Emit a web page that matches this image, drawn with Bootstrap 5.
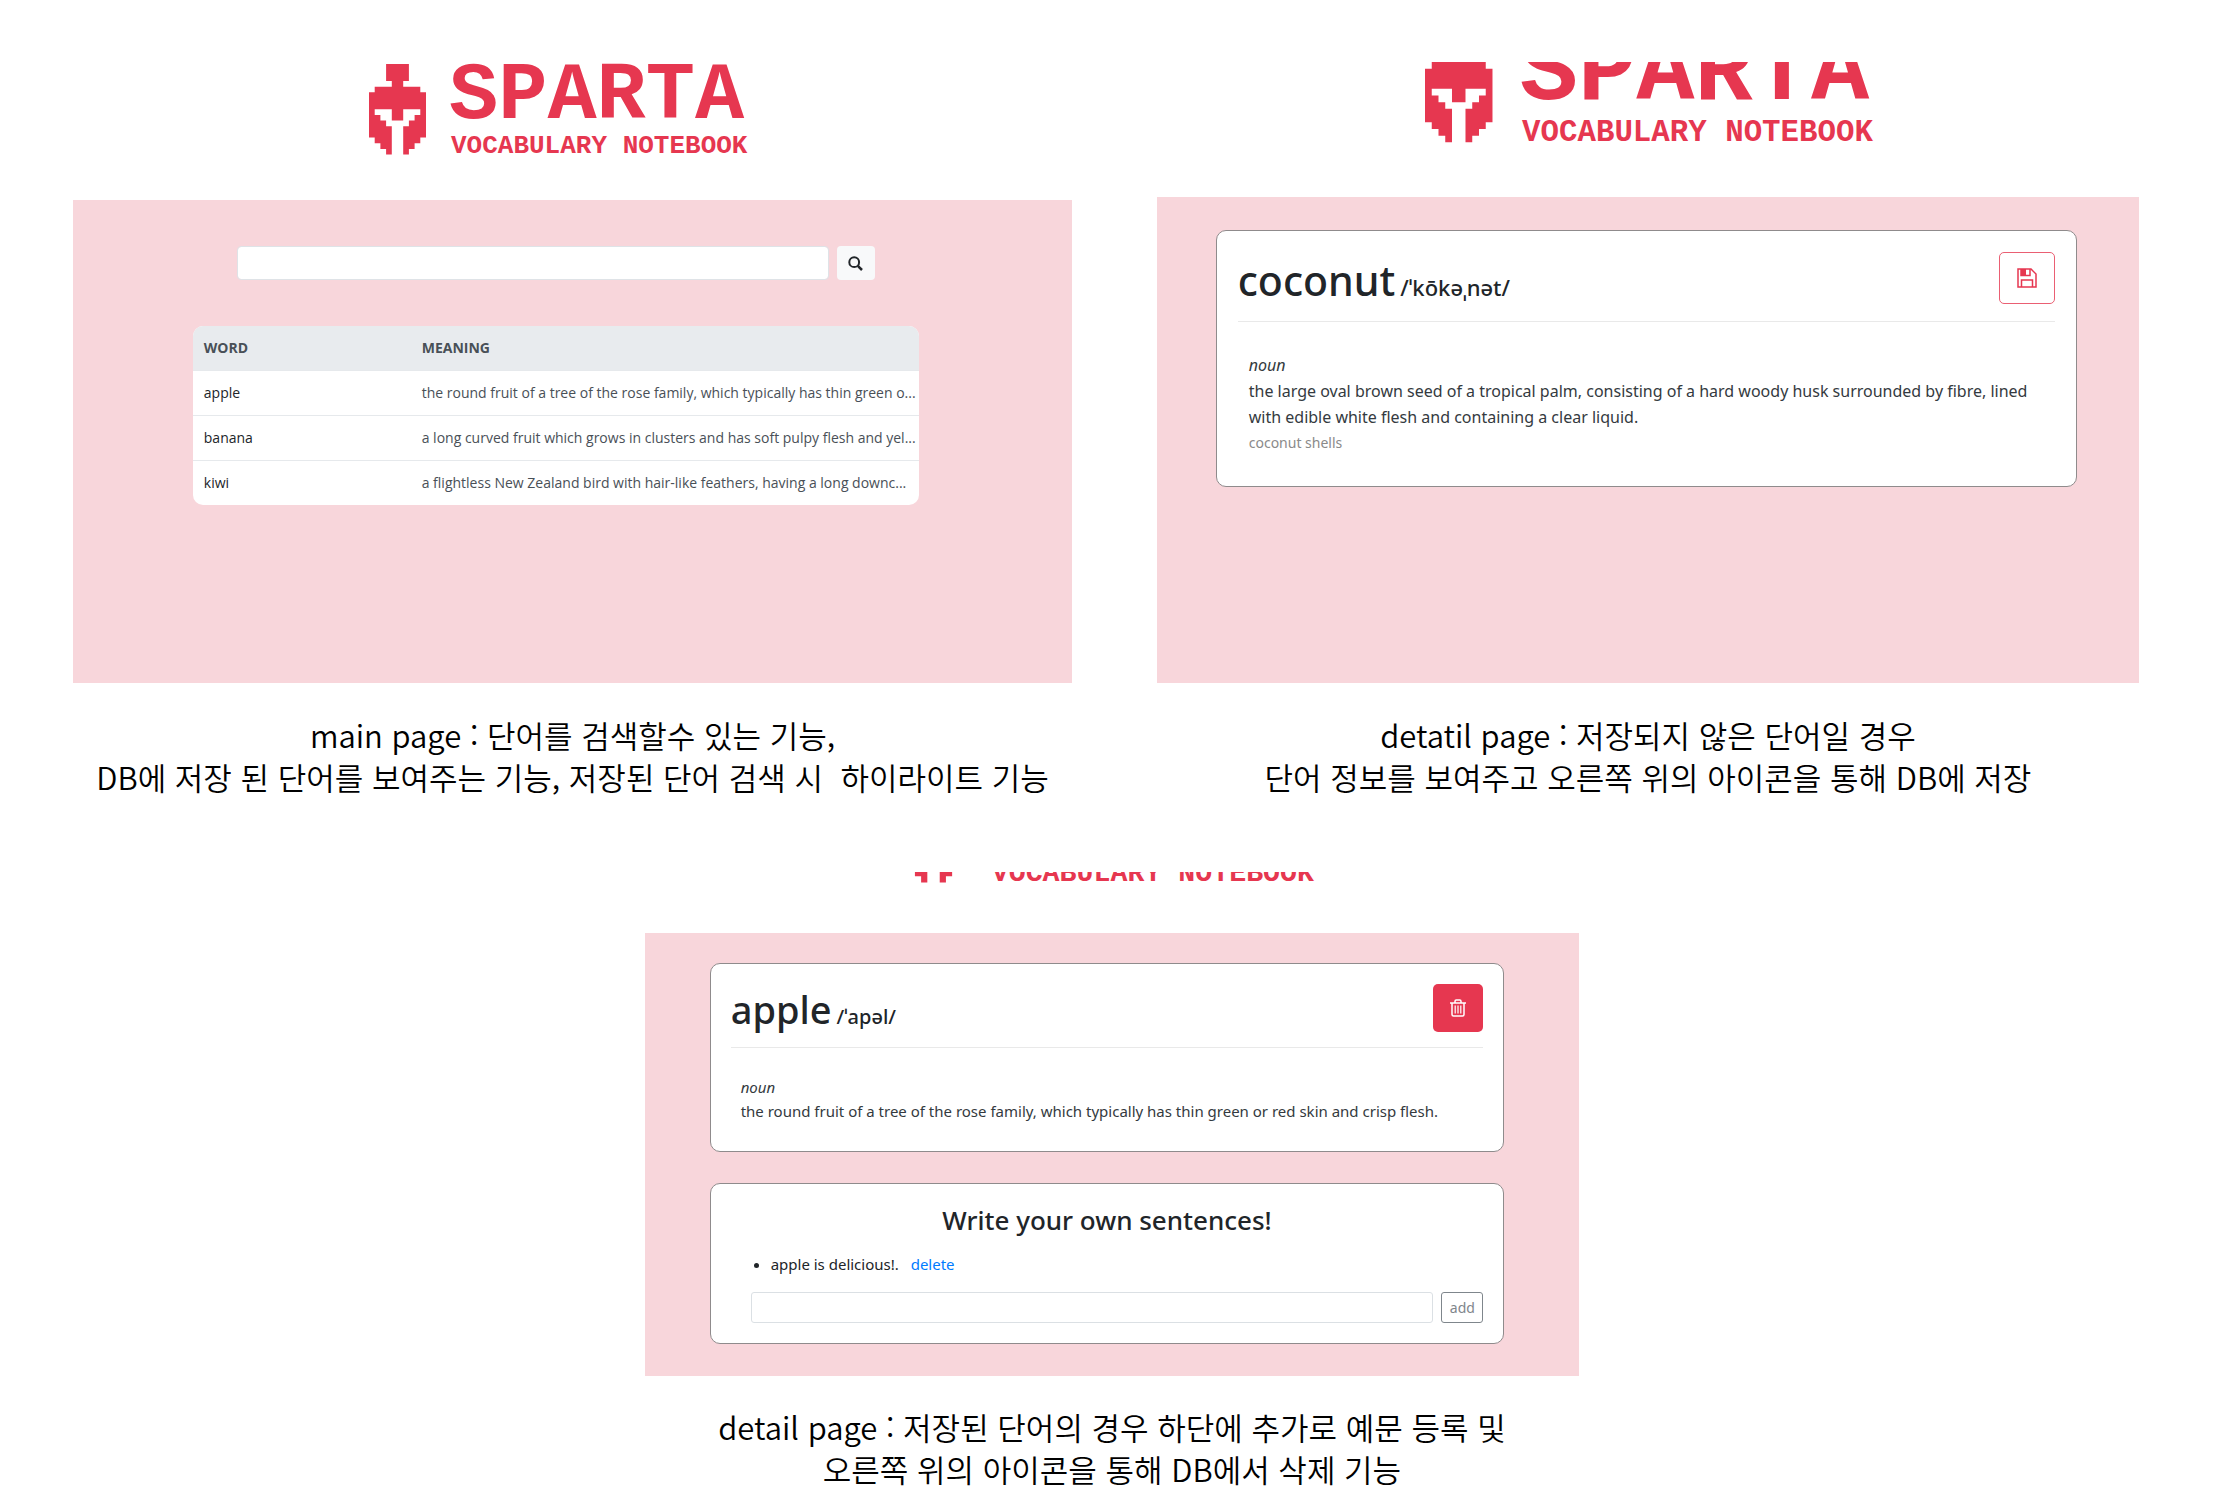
<!DOCTYPE html>
<html lang="ko">
<head>
<meta charset="utf-8">
<meta name="viewport" content="width=device-width, initial-scale=1">
<title>Sparta Vocabulary Notebook</title>
<link href="https://cdn.jsdelivr.net/npm/bootstrap@5.3.0/dist/css/bootstrap.min.css" rel="stylesheet">
<style>
  body { font-family: "Noto Sans", "Noto Sans CJK KR", sans-serif; color: #212529; background: #fff; }
  .board { padding: 62px 2px 0 0; }
  .top-shots { padding: 0 85px 0 73px; gap: 85px; }
  .shot-main { flex: 999 1 0; min-width: 0; }
  .shot-save { flex: 982 1 0; min-width: 0; }
  .shot-own { width: 42%; margin-top: 74px; }
  .brand-strip { display: flex; justify-content: center; align-items: flex-end; overflow: hidden; }
  .brand-strip svg { flex: none; fill: #e63750; overflow: visible; }
  .brand-strip text { font-family: "Liberation Mono", monospace; font-weight: 700; }
  .shot-main .brand-strip { height: 138px; padding: 0 33px 45px 0; overflow: visible; }
  .shot-save .brand-strip { height: 135px; padding: 0 3px 54px 0; }
  .shot-own .brand-strip { height: 61px; padding: 0 10px 50px 0; }
  .pink { background: #f8d6db; }
  .shot-main .pink { height: 483px; padding: 46px 33px 0 0; }
  .shot-save .pink { height: 486px; padding: 33px 3px 0 0; }
  .shot-own .pink { padding: 30px 10px 32px 0; }
  .search-bar { width: 66%; gap: 8px; margin-bottom: 46px; }
  .search-bar input { height: 34px; border-color: #dfe3e7; border-radius: 4px; }
  .search-bar button { width: 38px; height: 34px; flex: none; background: #f8f9fa; border-radius: 4px; }
  .word-wrap { width: 75.2%; border-radius: 10px; overflow: hidden; background: #fff; }
  .word-list { table-layout: fixed; font-family: "Open Sans", sans-serif; font-size: 14px; line-height: 20px; margin: 0; }
  .word-list th, .word-list td { padding: 12px 0 12px 11px; border-color: #e6e9ec; white-space: nowrap; color: #495057; }
  .word-list tbody tr:last-child td { border-bottom: 0; }
  .word-list thead th { background: #e8ebee; color: #495057; }
  .word-list td a { color: #212529; text-decoration: none; }
  .word-list th:first-child { width: 30%; }
  .panel-box { background: #fff; border: 1px solid #8f8b8c; border-radius: 10px; }
  .shot-save .panel-box { width: 88%; height: 257px; padding: 21px; font-size: 16px; line-height: 26px; }
  .shot-own .panel-box { width: 86%; padding: 20px; font-size: 15px; line-height: 24px; }
  .entry-head { border-bottom: 1px solid #e9e9e9; }
  .shot-save .entry-head { height: 70px; }
  .shot-own .entry-head { height: 64px; }
  .entry-head h1 { font-weight: 500; margin: 0; line-height: 56px; white-space: nowrap; }
  .shot-save h1 { font-size: 41px; }
  .shot-own h1 { font-size: 38px; line-height: 50px; }
  .entry-head h1 span { font-weight: 500; margin-left: 5px; }
  .shot-save h1 span { font-size: 22px; }
  .shot-own h1 span { font-size: 20px; }
  .save-btn { width: 56px; height: 52px; border: 1px solid #ea5f73; border-radius: 5px; background: #fff; }
  .trash-btn { width: 50px; height: 48px; border: 0; border-radius: 5px; background: #e63750; }
  .entry-body { padding: 30px 11px 0; color: #343a40; }
  .shot-own .entry-body { padding: 27px 10px 8px; }
  .entry-body p { margin: 0; white-space: nowrap; }
  .entry-body .usage { color: #8a8a8a; font-size: 14px; }
  .own-box { margin-top: 31px; }
  .own-box h2 { font-size: 26px; line-height: 32px; font-weight: 500; margin: 0 0 16px; text-align: center; }
  .own-box ul { margin: 0 0 16px; padding-left: 40px; }
  .own-box li a { color: #007bff; text-decoration: none; margin-left: 8px; }
  .add-row { gap: 8px; padding-left: 20px; }
  .add-row input { height: 31px; border-color: #dbe0e4; border-radius: 3px; }
  .add-row button { height: 31px; width: 42px; flex: none; padding: 0; font-size: 14px; color: #7f868c; border: 1px solid #7f868c; border-radius: 3px; background: #fff; }
  .note-text { margin: 31px 0 0; font-size: 31px; line-height: 42px; color: #000; text-align: center; white-space: pre; font-family: "Noto Sans CJK KR", sans-serif; font-weight: 350; }
  .shot-own .note-text { margin-top: 30px; }
  .note-text span { display: block; }
</style>
</head>
<body>
<main class="board">
  <div class="top-shots d-flex align-items-start">
    <figure class="shot-main m-0">
      <div class="brand-strip">
        <svg width="375" height="91" viewBox="0 0 375 91">
          <path transform="scale(5.7 5.66)" d="M3 0h4v3H6v1h3v1h1v8H9v1H8v1H7v1H6v-5h1v-1h1V9h1V8H6v2H4V8H1v1h1v1h1v1h1v5H3v-1H2v-1H1v-1H0V5h1V4h3V3H3z"/>
          <text x="80" y="54" font-size="82">SPARTA</text><text x="82" y="89" font-size="26">VOCABULARY NOTEBOOK</text>
        </svg>
      </div>
      <div class="pink">
        <form class="search-bar d-flex mx-auto">
          <input class="form-control" type="text" aria-label="Search word">
          <button class="btn p-0 border-0 d-flex align-items-center justify-content-center" type="button" aria-label="Search">
            <svg width="15" height="15" viewBox="0 0 15 15" fill="none" stroke="#212529"><circle cx="6.2" cy="6.2" r="4.9" stroke-width="2"/><path d="M9.8 9.8L14 14" stroke-width="2.5"/></svg>
          </button>
        </form>
        <div class="word-wrap mx-auto">
          <table class="table word-list">
            <thead><tr><th>WORD</th><th>MEANING</th></tr></thead>
            <tbody>
              <tr><td><a href="#apple">apple</a></td><td>the round fruit of a tree of the rose family, which typically has thin green o...</td></tr>
              <tr><td><a href="#banana">banana</a></td><td>a long curved fruit which grows in clusters and has soft pulpy flesh and yel...</td></tr>
              <tr><td><a href="#kiwi">kiwi</a></td><td>a flightless New Zealand bird with hair-like feathers, having a long downc...</td></tr>
            </tbody>
          </table>
        </div>
      </div>
      <figcaption class="note-text"><span>main page : 단어를 검색할수 있는 기능,</span><span>DB에 저장 된 단어를 보여주는 기능, 저장된 단어 검색 시  하이라이트 기능</span></figcaption>
    </figure>

    <figure class="shot-save m-0">
      <div class="brand-strip">
        <svg width="444" height="108" viewBox="0 0 375 91">
          <path transform="scale(5.7 5.66)" d="M3 0h4v3H6v1h3v1h1v8H9v1H8v1H7v1H6v-5h1v-1h1V9h1V8H6v2H4V8H1v1h1v1h1v1h1v5H3v-1H2v-1H1v-1H0V5h1V4h3V3H3z"/>
          <text x="80" y="54" font-size="82">SPARTA</text><text x="82" y="89" font-size="26">VOCABULARY NOTEBOOK</text>
        </svg>
      </div>
      <div class="pink">
        <section class="panel-box mx-auto">
          <div class="entry-head d-flex justify-content-between align-items-start">
            <h1>coconut<span>/ˈkōkəˌnət/</span></h1>
            <button class="save-btn p-0 d-flex align-items-center justify-content-center" type="button" aria-label="Save">
              <svg width="20" height="20" viewBox="0 0 20 20" fill="none" stroke="#e63750" stroke-width="1.5"><path d="M1 1h13l5 5v13H1z"/><path d="M4 1v6.500h9V1M4.500 19v-7h11v7"/><path d="M4 1h5v6.500H4z" fill="#e63750" stroke="none"/></svg>
            </button>
          </div>
          <div class="entry-body">
            <p><em>noun</em></p>
            <p>the large oval brown seed of a tropical palm, consisting of a hard woody husk surrounded by fibre, lined<br>with edible white flesh and containing a clear liquid.</p>
            <p class="usage">coconut shells</p>
          </div>
        </section>
      </div>
      <figcaption class="note-text"><span>detatil page : 저장되지 않은 단어일 경우</span><span>단어 정보를 보여주고 오른쪽 위의 아이콘을 통해 DB에 저장</span></figcaption>
    </figure>
  </div>

  <figure class="shot-own mx-auto mb-0">
    <div class="brand-strip">
      <svg width="409" height="99" viewBox="0 0 375 91">
        <path transform="scale(5.7 5.66)" d="M3 0h4v3H6v1h3v1h1v8H9v1H8v1H7v1H6v-5h1v-1h1V9h1V8H6v2H4V8H1v1h1v1h1v1h1v5H3v-1H2v-1H1v-1H0V5h1V4h3V3H3z"/>
        <text x="80" y="54" font-size="82">SPARTA</text><text x="82" y="89" font-size="26">VOCABULARY NOTEBOOK</text>
      </svg>
    </div>
    <div class="pink">
      <section class="panel-box mx-auto">
        <div class="entry-head d-flex justify-content-between align-items-start">
          <h1>apple<span>/ˈapəl/</span></h1>
          <button class="trash-btn p-0 d-flex align-items-center justify-content-center" type="button" aria-label="Delete word">
            <svg width="18" height="18" viewBox="0 0 18 18" fill="none" stroke="#fff" stroke-width="1.500"><path d="M1 4h16M6 4V2.200Q6 1 7.200 1h3.600Q12 1 12 2.200V4M3 4v11.500Q3 17 4.500 17h9q1.500 0 1.500-1.500V4"/><path d="M6.200 6.500v8M9 6.500v8M11.800 6.500v8" stroke-width="1.200"/></svg>
          </button>
        </div>
        <div class="entry-body">
          <p><em>noun</em></p>
          <p>the round fruit of a tree of the rose family, which typically has thin green or red skin and crisp flesh.</p>
        </div>
      </section>
      <section class="panel-box own-box mx-auto">
        <h2>Write your own sentences!</h2>
        <ul><li>apple is delicious!. <a href="#delete">delete</a></li></ul>
        <form class="add-row d-flex">
          <input class="form-control" type="text" aria-label="New sentence">
          <button type="button">add</button>
        </form>
      </section>
    </div>
    <figcaption class="note-text"><span>detail page : 저장된 단어의 경우 하단에 추가로 예문 등록 및</span><span>오른쪽 위의 아이콘을 통해 DB에서 삭제 기능</span></figcaption>
  </figure>
</main>
<script src="https://cdn.jsdelivr.net/npm/bootstrap@5.3.0/dist/js/bootstrap.bundle.min.js"></script>
</body>
</html>
